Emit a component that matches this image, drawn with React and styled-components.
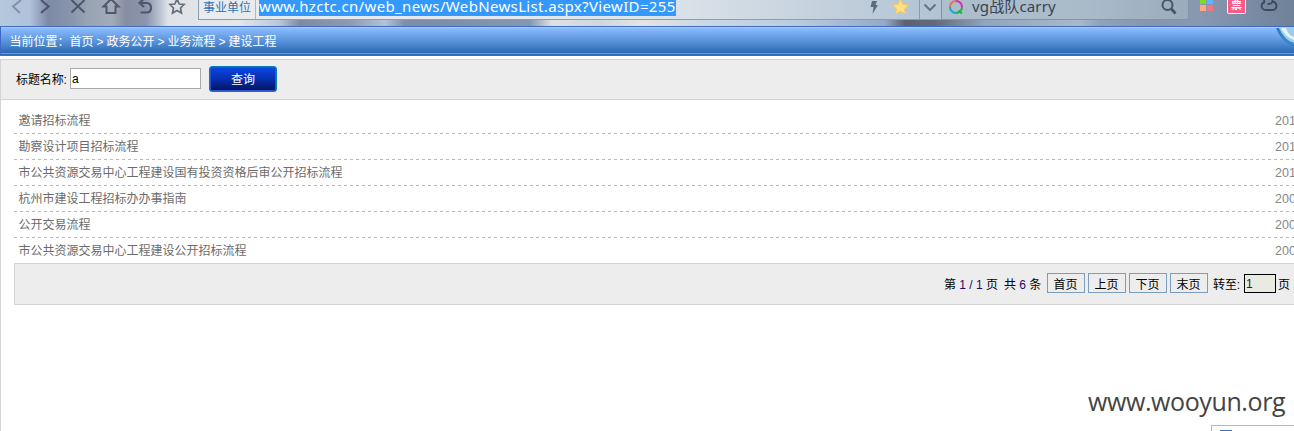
import React from 'react';
import styled, { createGlobalStyle } from 'styled-components';

const Global = createGlobalStyle`
  *{box-sizing:border-box}
  html,body{margin:0;background:#fff;overflow:hidden}
  body{font:12px/16px "Liberation Sans","Noto Sans CJK SC",sans-serif;color:#000}
  #root{width:1294px;height:431px;overflow:hidden}
`;
const Page = styled.div`width:1294px;height:431px;display:flex;flex-direction:column;position:relative;overflow:hidden;`;

const Toolbar = styled.div`
  height:26px;display:flex;align-items:flex-start;flex:none;
  background:linear-gradient(90deg,#b5c8dc 0,#b0c1da 30px,#7d8ba6 48px,#8794ab 70px,#98a3b4 88px,#a4abb8 112px,#868ea2 126px,#8b95ab 146px,#b3bccb 158px,#dfe3e8 168px,#e3e6ea 240px,#b8c6d8 280px,#7e8ba0 300px,#8e9ab0 350px,#b3c3da 385px,#7d8fa8 405px,#7d8fa8 440px,#8398b0 530px,#dfe2e5 552px,#ccd8df 600px,#e4e4e3 640px,#ccd9e5 700px,#b8cbdd 800px,#93a9c8 885px,#5c6170 905px,#626b7a 935px,#93a5b8 985px,#a9b9c9 1080px,#8fa2b8 1100px,#8796ab 1150px,#8798b0 1200px,#6f8299 1294px);
`;
const NavIcons = styled.div`display:flex;width:198px;flex:none;height:20px;`;
const Icon = styled.svg`display:block;flex:none;fill:none;overflow:hidden;`;
const Address = styled.div`
  display:flex;width:743px;height:20px;flex:none;border:solid #8e9dad;border-width:0 0 1px 1px;
  background:linear-gradient(90deg,#e9ecef 0,#dfe6ec 60%,#b2c3d3 100%);
`;
const SiteKind = styled.div`
  width:57px;flex:none;height:19px;padding-left:4px;border-right:1px solid #adb8c4;color:#2e72b4;line-height:14px;
  font-family:"Noto Sans CJK SC",sans-serif;white-space:nowrap;
`;
const Url = styled.div`
  margin-left:3px;width:417px;height:16px;flex:none;background:#3399ff;color:#fff;white-space:nowrap;
  font:15px/13px "Noto Sans","Open Sans",sans-serif;letter-spacing:0.35px;
`;
const AddressTools = styled.div`display:flex;margin:0 3px 0 auto;height:19px;`;
const Search = styled.div`
  display:flex;width:248px;height:20px;flex:none;border:solid #8494a6;border-width:0 1px 1px 1px;
  background:linear-gradient(90deg,#adbecd,#a9bac9 60%,#9aabbd);
`;
const SearchText = styled.div`width:187px;font:15px/13px "Noto Sans","Noto Sans CJK SC",sans-serif;letter-spacing:0.15px;color:#39444f;white-space:nowrap;`;
const Extras = styled.div`display:flex;height:20px;`;

const Crumbs = styled.div`
  height:30px;flex:none;display:flex;align-items:center;padding:1px 0 0 8.5px;color:#fff;position:relative;overflow:hidden;
  border:solid #3f69c6;border-width:1px 0 1px 1px;
  background:linear-gradient(#a9cdfb 0 1px,#8bbcfd 1px,#5e96de 13px,#2b69b3 26px,#6d9bcb 26px 27px,#2d6bb4 27px);
  word-spacing:-0.35px;white-space:pre;
`;
const Corner = styled(Icon)`position:absolute;right:0;top:1px;`;
const Content = styled.main`flex:1;margin-top:3px;border-left:1px solid #d3d3d3;display:flex;flex-direction:column;`;
const SearchBar = styled.form`
  height:41px;flex:none;display:flex;align-items:flex-start;padding:8px 0 0 14px;background:#ededed;
  border:solid #d3d3d3;border-width:1px 0;
`;
const Label = styled.label`width:55px;padding:4px 0 0 1px;white-space:nowrap;letter-spacing:-0.1px;`;
const TitleInput = styled.input`
  width:131px;height:21px;border:1px solid #a9a9a9;background:#fff;padding:0 1px;font:12px "Liberation Sans";outline:0;margin:0;
`;
const Submit = styled.button`
  width:68px;height:26px;margin:-2px 0 0 8px;padding:0;border:1px solid #067bb5;border-radius:3px;
  box-shadow:inset 0 0 0 1px #2a55cf;color:#fff;background:linear-gradient(#0c45e6,#0630b0 50%,#02125c);
  font:12px/20px "Noto Sans CJK SC",sans-serif;
`;
const List = styled.ul`list-style:none;margin:8px 0 0 13px;padding:0;`;
const Row = styled.li`
  display:flex;justify-content:space-between;height:26px;padding:5px 0 0 4.5px;color:#6b6b6b;white-space:nowrap;
  background:${p => p.$last ? 'none' : 'repeating-linear-gradient(90deg,#b9b9b9 0 3px,transparent 3px 6px) 0 25px/100% 1px no-repeat'};
`;
const DateText = styled.span`width:19px;color:#888;font-size:12.5px;`;
const Pager = styled.div`
  height:42px;flex:none;margin:-1px 0 0 13px;border:solid #d3d3d3;border-width:1px 0 1px 1px;background:#ededed;
  display:flex;justify-content:flex-end;align-items:flex-start;padding:9px 4px 0 0;white-space:pre;
`;
const PagerText = styled.span`padding-top:4px;width:${p => p.$w}px;flex:none;`;
const GoTo = styled(PagerText)`padding-left:2px;letter-spacing:-0.1px;`;
const Num = styled.span`color:#1a0a6a;`;
const PageButton = styled.button`
  width:38px;height:20px;margin:0 3px 0 0;padding:1px 1px 0 0;border:1px solid #7b9ebd;background:#ededed;color:#000;
  font:12px/17px "Noto Sans CJK SC",sans-serif;
`;
const PageInput = styled.input`
  width:32px;height:19px;margin:1px 2px 0 0;padding:0 1px;border:1px solid #000;background:#e9eae1;font:12px "Liberation Sans";color:#223;outline:0;
`;
const Watermark = styled.div`
  position:absolute;left:1088px;top:385px;font:25px/32px "Open Sans",sans-serif;color:#444;white-space:nowrap;letter-spacing:-0.4px;
`;
const Popup = styled.div`
  position:absolute;left:1211px;top:425px;width:90px;height:10px;border:1px solid #a9b9d3;background:#fdfdfe;padding:4px 0 0 8px;
`;
const PopupMark = styled.div`width:12px;height:4px;background:#3a72b8;`;

const rows = [
  ['邀请招标流程', '2014'],
  ['勘察设计项目招标流程', '2014'],
  ['市公共资源交易中心工程建设国有投资资格后审公开招标流程', '2014'],
  ['杭州市建设工程招标办办事指南', '2009'],
  ['公开交易流程', '2009'],
  ['市公共资源交易中心工程建设公开招标流程', '2009'],
];

export default function App() {
  return (
    <Page>
      <Global />
      <Toolbar>
        <NavIcons>
          <Icon width="198" height="20" strokeWidth="2">
            <path d="M21 0L13 6.500L20 13" stroke="#8191a6" />
            <path d="M41 0L48.500 6.500L41 13" stroke="#4b566b" strokeWidth="2.200" />
            <path d="M71.500 0L84.500 12.500M84.500 0L71.500 12.500" stroke="#4c566a" strokeWidth="2" />
            <path d="M103.500 6.500L111 -1L118.500 6.500H115.500V13H106.500V6.500Z" stroke="#4e586b" />
            <path d="M143.500 -1L139.500 3L144 7M140 3H146.500Q151 3 151 8Q151 12.500 146.500 12.500H140.500" stroke="#4e586b" strokeWidth="2.200" />
            <path d="M177 -1L179.200 4L184 4.500L180.500 8L181.500 13L177 10.500L172.500 13L173.500 8L170 4.500L174.800 4Z" stroke="#666e79" strokeWidth="1.700" />
          </Icon>
        </NavIcons>
        <Address>
          <SiteKind>事业单位</SiteKind>
          <Url>www.hzctc.cn/web_news/WebNewsList.aspx?ViewID=255</Url>
          <AddressTools>
            <Icon width="75" height="19">
              <path d="M9 1H14L12.500 5H15L9.500 14L10.500 7H7.500Z" fill="#5d6c7d" />
              <path d="M37.500 -1L40 4.500L45.500 5L41.500 9L42.500 14L37.500 11.300L32.500 14L33.500 9L29.500 5L35 4.500Z" fill="#ffe283" stroke="#f7c65c" />
              <path d="M56.500 0V19" stroke="#8b9bac" />
              <path d="M61.500 4.500L67 10L72.500 4.500" stroke="#657486" strokeWidth="2" />
            </Icon>
          </AddressTools>
        </Address>
        <Search>
          <Icon width="30" height="19" viewBox="3 0 30 19" strokeWidth="2">
            <path d="M11 7A6 6 0 0 1 17 1" stroke="#ee7048" />
            <path d="M17 1A6 6 0 0 1 23 7" stroke="#d52da8" />
            <path d="M23 7A6 6 0 0 1 17 13M19.500 10.500L23 13.500" stroke="#21b24c" />
            <path d="M17 13A6 6 0 0 1 11 7" stroke="#18a5e0" />
          </Icon>
          <SearchText>vg战队carry</SearchText>
          <Icon width="28" height="19"><circle cx="8.500" cy="5" r="5" stroke="#495564" strokeWidth="2" /><path d="M12 8.500L16.500 13.500" stroke="#495564" strokeWidth="2.800" /></Icon>
        </Search>
        <Extras>
          <Icon width="105" height="20">
            <path d="M11 -2H17V4H11Z" fill="#7fdd1e" /><path d="M18 -2H24V4H18Z" fill="#60b6ff" /><path d="M11 5H17V11H11Z" fill="#ffa77d" /><path d="M18 5H24V11H18Z" fill="#f27582" />
            <rect x="38.500" y="-4" width="18" height="17.500" rx="1" fill="#fb5c86" stroke="#fff" />
            <text x="42" y="9" fill="#fff" fontSize="11" fontWeight="700" fontFamily="Noto Sans CJK SC">票</text>
            <path d="M75 -1Q75 2 76 2Q72.500 3 72.500 6Q73 10 77 10H84Q87.500 9.500 87.500 5.500Q87 2 83.500 1.500V-1M78.500 3.500Q81 5 83.500 2" stroke="#3f4b5c" strokeWidth="1.900" />
          </Icon>
        </Extras>
      </Toolbar>
      <Crumbs>
        当前位置：首页 &gt; 政务公开 &gt; 业务流程 &gt; 建设工程
        <Corner width="18" height="20">
          <defs><linearGradient id="petal" x1="0" y1="0" x2="1" y2="1"><stop stopColor="#1e7cc2" /><stop offset="1" stopColor="#2c82c6" stopOpacity="0.500" /></linearGradient></defs>
          <path d="M0 0H18V19Q5 14 0 0Z" fill="url(#petal)" /><path d="M3 0H18V15Q8 12 3 0Z" fill="#9dcdeb" /><path d="M5 0H10Q12 7 18 9V12Q9 9 5 0Z" fill="#e7f2f5" />
        </Corner>
      </Crumbs>
      <Content>
        <SearchBar onSubmit={e => e.preventDefault()}>
          <Label>标题名称:</Label>
          <TitleInput defaultValue="a" />
          <Submit>查询</Submit>
        </SearchBar>
        <List>
          {rows.map(([title, date], i) => (
            <Row key={title} $last={i === rows.length - 1}><span>{title}</span><DateText>{date}</DateText></Row>
          ))}
        </List>
        <Pager>
          <PagerText $w={60}>第 <Num>1 / 1</Num> 页</PagerText>
          <PagerText $w={43}>共 <Num>6</Num> 条</PagerText>
          {['首页', '上页', '下页', '末页'].map(t => <PageButton key={t}>{t}</PageButton>)}
          <GoTo $w={33}>转至:</GoTo>
          <PageInput defaultValue="1" />
          <PagerText $w={12}>页</PagerText>
        </Pager>
      </Content>
      <Watermark>www.wooyun.org</Watermark>
      <Popup><PopupMark /></Popup>
    </Page>
  );
}
